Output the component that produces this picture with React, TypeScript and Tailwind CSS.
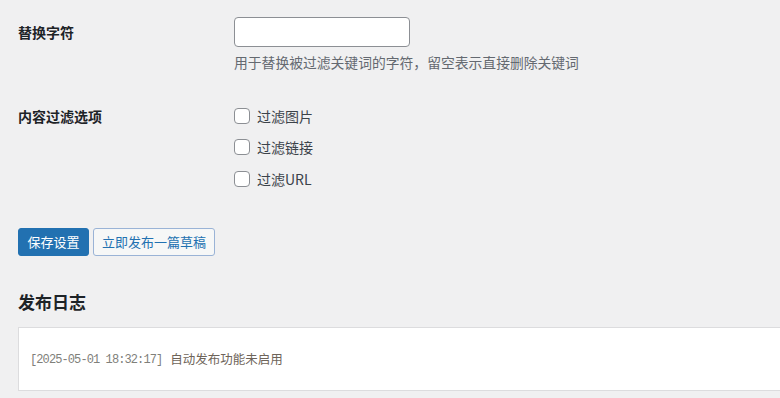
import React from "react";

const cjk = "font-['Noto_Sans_CJK_SC','Noto_Sans',sans-serif]";

const filterOptions = ["过滤图片", "过滤链接", "过滤URL"];

const Checkbox: React.FC<{ label: string }> = ({ label }) => (
  <label className="flex h-[31.5px] items-center">
    <span className="h-4 w-4 rounded-[4px] border border-[#8c8f94] bg-white" />
    <span className="ml-[7px] text-[14px] leading-5 text-[#3c434a]">{label}</span>
  </label>
);

export default function App() {
  return (
    <div className={`h-[398px] w-[780px] overflow-hidden bg-[#f0f0f1] pl-[18px] ${cjk}`}>
      <div className="mt-[17px] flex">
        <div className="w-[216px] text-[14px] font-bold leading-[30px] text-[#1d2327]">替换字符</div>
        <div>
          <input
            type="text"
            className="block h-[30px] w-[176px] rounded-[4px] border border-[#8c8f94] bg-white px-2 outline-none"
          />
          <p className="mt-[5px] text-[13.8px] leading-5 text-[#646970]">
            用于替换被过滤关键词的字符，留空表示直接删除关键词
          </p>
        </div>
      </div>

      <div className="mt-[28px] flex">
        <div className="w-[216px] text-[14px] font-bold leading-[32px] text-[#1d2327]">内容过滤选项</div>
        <div className="flex flex-col">
          {filterOptions.map((o) => (
            <Checkbox key={o} label={o} />
          ))}
        </div>
      </div>

      <div className="mt-[33px] flex gap-1">
        <button className="h-[28px] w-[71px] rounded-[3px] border border-[#2271b1] bg-[#2271b1] text-[13px] text-white">
          保存设置
        </button>
        <button className="h-[28px] w-[122px] rounded-[3px] border border-[#9ab3d6] bg-[#f6f7f7] text-[13px] text-[#2271b1]">
          立即发布一篇草稿
        </button>
      </div>

      <h2 className="mt-[34px] text-[17px] font-bold leading-6 text-[#1d2327]">发布日志</h2>

      <div className="mt-[13px] flex h-[64px] w-[800px] items-center border border-[#dcdcde] bg-white pl-[11px] pt-[2px]">
        <span className="font-['Liberation_Mono',monospace] text-[12px] tracking-[-0.9px] text-[#80807a]">
          [2025-05-01 18:32:17]
        </span>
        <span className={`ml-[8px] text-[12.5px] text-[#6e6459] ${cjk}`}>自动发布功能未启用</span>
      </div>
    </div>
  );
}
